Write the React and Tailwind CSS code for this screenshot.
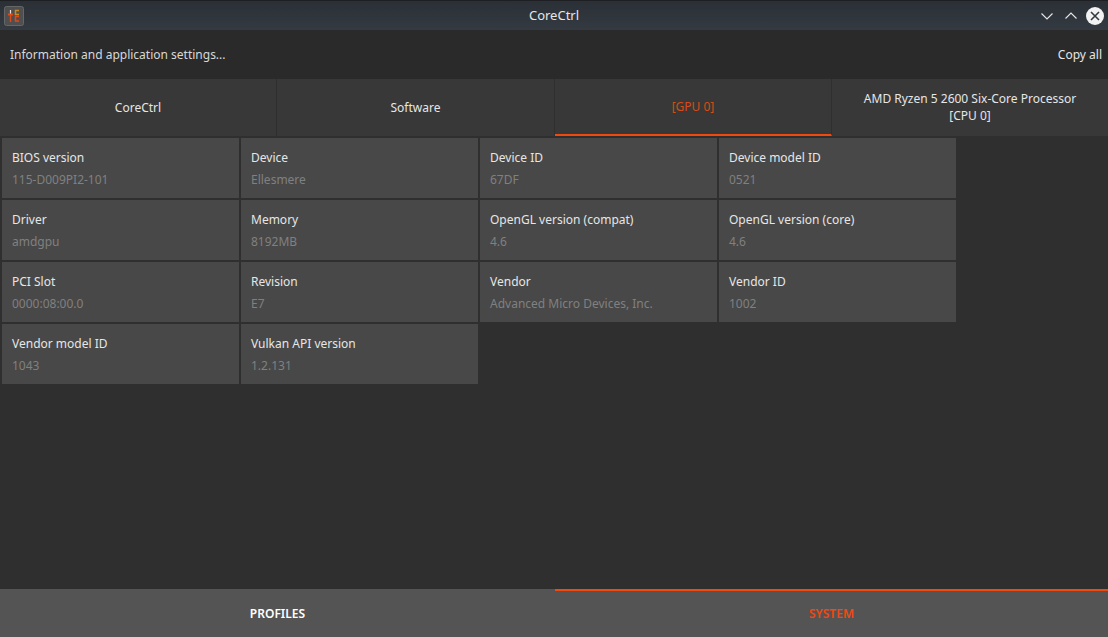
import React from 'react';

const tabs = [
  { label: 'CoreCtrl' },
  { label: 'Software' },
  { label: '[GPU 0]', active: true },
  { label: 'AMD Ryzen 5 2600 Six-Core Processor\n[CPU 0]', wrapped: true },
];

const info = [
  ['BIOS version', '115-D009PI2-101'],
  ['Device', 'Ellesmere'],
  ['Device ID', '67DF'],
  ['Device model ID', '0521'],
  ['Driver', 'amdgpu'],
  ['Memory', '8192MB'],
  ['OpenGL version (compat)', '4.6'],
  ['OpenGL version (core)', '4.6'],
  ['PCI Slot', '0000:08:00.0'],
  ['Revision', 'E7'],
  ['Vendor', 'Advanced Micro Devices, Inc.'],
  ['Vendor ID', '1002'],
  ['Vendor model ID', '1043'],
  ['Vulkan API version', '1.2.131'],
];

const AppIcon = () => (
  <svg width="20" height="20" viewBox="0 0 20 20" className="ml-1">
    <rect x="0.5" y="0.5" width="19" height="19" rx="2" fill="#4f4f4f" stroke="#666666" />
    <path d="M6.5 4v5" stroke="#e8e0d8" strokeWidth="1.2" />
    <path d="M6.5 9v7" stroke="#e0491a" strokeWidth="1.4" />
    <path d="M4 8.5h5" stroke="#e0491a" strokeWidth="2" />
    <path d="M15 4.5h-3.5v4H15" fill="none" stroke="#c98a22" strokeWidth="1.5" />
    <path d="M15 10.5h-3.5v4.5H15" fill="none" stroke="#e0491a" strokeWidth="1.5" />
  </svg>
);

const TitleBar = () => (
  <div className="h-[30px] flex items-center justify-between bg-gradient-to-b from-[#2b3037] to-[#343a41] border-t border-[#1d1f22] relative">
    <AppIcon />
    <span className="absolute left-0 right-0 text-center text-[13px] text-[#e6e6e6]">CoreCtrl</span>
    <div className="flex items-center pr-1">
      <svg width="14" height="14" viewBox="0 0 14 14" fill="none" stroke="#e8e8e8" strokeWidth="1.1" className="mr-[10px]">
        <path d="M1.5 4.5 7 10l5.5-5.5" />
      </svg>
      <svg width="14" height="14" viewBox="0 0 14 14" fill="none" stroke="#e8e8e8" strokeWidth="1.1" className="mr-[8px]">
        <path d="M1.5 9.5 7 4l5.5 5.5" />
      </svg>
      <svg width="18" height="18" viewBox="0 0 18 18">
        <circle cx="9" cy="9" r="9" fill="#f2f2f2" />
        <path d="M5 5l8 8M13 5l-8 8" stroke="#33383e" strokeWidth="1.6" />
      </svg>
    </div>
  </div>
);

const InfoCell = ({ name, value }) => (
  <div className="h-[60px] bg-[#484848] pl-[10px] pt-[10px]">
    <div className="text-xs leading-[19px] text-[#e6e6e6]">{name}</div>
    <div className="text-xs leading-[19px] mt-[3px] text-[#808080]">{value}</div>
  </div>
);

export default function App() {
  return (
    <div className="w-[1108px] h-[637px] overflow-hidden flex flex-col bg-[#2f2f2f] font-['Noto_Sans',sans-serif]">
      <TitleBar />

      <div className="h-[49px] flex items-center justify-between pr-[6px] pl-[10px] bg-[#2a2a2a] text-xs text-[#d8d8d8]">
        <span>Information and application settings...</span>
        <span className="text-[#e6e6e6]">Copy all</span>
      </div>

      <div className="h-[57px] grid grid-cols-[277px_278px_277px_276px] bg-[#383838]">
        {tabs.map((tab) => (
          <div
            key={tab.label}
            className={`flex items-center justify-center text-center whitespace-pre-line text-xs leading-[17px] border-r border-[#2f2f2f] last:border-r-0 ${
              tab.active ? 'text-[#d84b16] border-b-2 border-b-[#f04a10]' : 'text-[#e6e6e6]'
            } ${tab.wrapped ? 'pb-[2px]' : ''}`}
          >
            {tab.label}
          </div>
        ))}
      </div>

      <div className="flex-1 p-[2px]">
        <div className="w-[954px] grid grid-cols-4 gap-[2px]">
          {info.map(([name, value]) => (
            <InfoCell key={name} name={name} value={value} />
          ))}
        </div>
      </div>

      <div className="h-[48px] grid grid-cols-[555px_553px] bg-[#545454] text-xs font-semibold">
        <div className="flex items-center justify-center text-white pt-[2px]">PROFILES</div>
        <div className="flex items-center justify-center text-[#f04a10] border-t-2 border-[#f04a10]">SYSTEM</div>
      </div>
    </div>
  );
}
